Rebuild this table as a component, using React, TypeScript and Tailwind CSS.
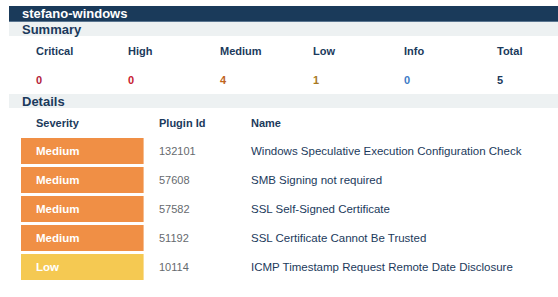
const summary = [
  { label: 'Critical', value: '0', color: 'text-[#b3223b]' },
  { label: 'High', value: '0', color: 'text-[#c8202f]' },
  { label: 'Medium', value: '4', color: 'text-[#c0641c]' },
  { label: 'Low', value: '1', color: 'text-[#a8791f]' },
  { label: 'Info', value: '0', color: 'text-[#3c7ac6]' },
  { label: 'Total', value: '5', color: 'text-[#1b3a5c]' },
];

const findings = [
  { severity: 'Medium', id: '132101', name: 'Windows Speculative Execution Configuration Check' },
  { severity: 'Medium', id: '57608', name: 'SMB Signing not required' },
  { severity: 'Medium', id: '57582', name: 'SSL Self-Signed Certificate' },
  { severity: 'Medium', id: '51192', name: 'SSL Certificate Cannot Be Trusted' },
  { severity: 'Low', id: '10114', name: 'ICMP Timestamp Request Remote Date Disclosure' },
];

function Band({ title }: { title: string }) {
  return (
    <div className="h-[14px] bg-[#edf1f2] pl-[13px] text-[13px] font-bold leading-[15px] text-[#1b3a5c]">
      {title}
    </div>
  );
}

export default function App() {
  return (
    <div className="min-h-[297px] bg-white pl-[9px] pt-[6px] font-['Liberation_Sans',Arial,sans-serif]">
      {/* Host header */}
      <div className="h-[16px] border-b border-[#5a7590] bg-[#1a3a5a] pl-[13px] text-[13px] font-bold leading-[15px] text-white">
        stefano-windows
      </div>

      <Band title="Summary" />

      {/* Summary counts */}
      <div className="grid grid-cols-[92px_92px_93px_91px_93px_1fr] pl-[27px] text-[11px] font-bold">
        {summary.map((s) => (
          <div key={s.label} className="flex flex-col">
            <div className="flex h-[28px] items-center pt-[3px] text-[#1b3a5c]">{s.label}</div>
            <div className={`flex h-[28px] items-center pt-[4px] ${s.color}`}>{s.value}</div>
          </div>
        ))}
      </div>

      <div className="h-[2px]" />
      <Band title="Details" />

      {/* Findings table */}
      <div className="grid grid-cols-[138px_92px_1fr] pl-[12px] text-[11px] text-[#1b3a5c]">
        <div className="flex h-[28px] items-center pl-[15px] pt-[2px] font-bold">Severity</div>
        <div className="flex h-[28px] items-center pt-[2px] font-bold">Plugin Id</div>
        <div className="flex h-[28px] items-center pt-[2px] font-bold">Name</div>
      </div>
      <div className="flex flex-col gap-[3px] pl-[12px] pt-[2px]">
        {findings.map((f) => (
          <div key={f.id} className="grid h-[26px] grid-cols-[138px_92px_1fr] items-center pt-[1px]">
            <div
              className={`-mt-[1px] flex h-[26px] w-[123px] items-center border-r border-white/40 pl-[15px] pt-[1px] text-[11.5px] font-bold text-white ${
                f.severity === 'Low' ? 'bg-[#f5c952]' : 'bg-[#f08f45]'
              }`}
            >
              {f.severity}
            </div>
            <div className="text-[11px] text-[#666a6e]">{f.id}</div>
            <div className="text-[11.5px] text-[#1b3a5c]">{f.name}</div>
          </div>
        ))}
      </div>
    </div>
  );
}
